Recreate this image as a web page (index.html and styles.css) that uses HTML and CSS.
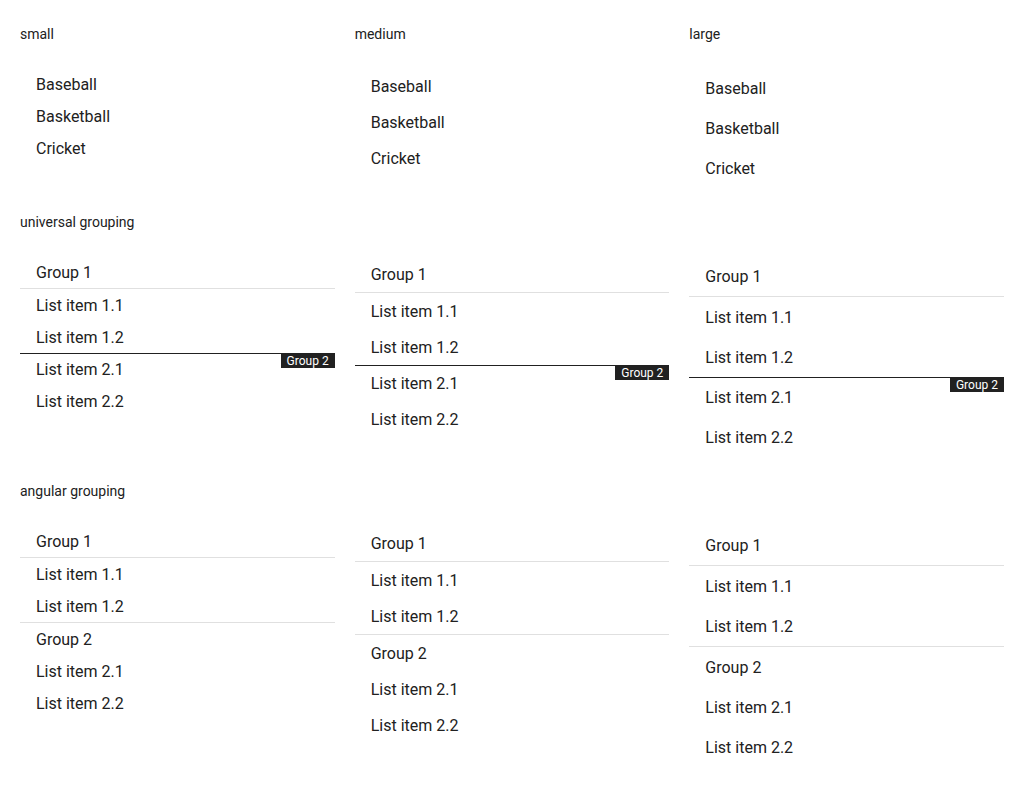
FILE: index.html
```
<!DOCTYPE html>
<html lang="en">
<head>
<meta charset="utf-8">
<title>List sizes and grouping</title>
<link rel="stylesheet" href="styles.css">
</head>
<body>
<main class="page">
  <section class="row">
    <div>
      <h2 class="title">small</h2>
      <ul class="list small"><li class="item">Baseball</li><li class="item">Basketball</li><li class="item">Cricket</li></ul>
    </div>
    <div>
      <h2 class="title">medium</h2>
      <ul class="list medium"><li class="item">Baseball</li><li class="item">Basketball</li><li class="item">Cricket</li></ul>
    </div>
    <div>
      <h2 class="title">large</h2>
      <ul class="list large"><li class="item">Baseball</li><li class="item">Basketball</li><li class="item">Cricket</li></ul>
    </div>
  </section>
  <section class="row">
    <h2 class="title wide">universal grouping</h2>
    <ul class="list small"><li class="item fixed">Group 1</li><li class="item">List item 1.1</li><li class="item">List item 1.2</li><li class="item first">List item 2.1<span class="tag">Group 2</span></li><li class="item">List item 2.2</li></ul>
    <ul class="list medium"><li class="item fixed">Group 1</li><li class="item">List item 1.1</li><li class="item">List item 1.2</li><li class="item first">List item 2.1<span class="tag">Group 2</span></li><li class="item">List item 2.2</li></ul>
    <ul class="list large"><li class="item fixed">Group 1</li><li class="item">List item 1.1</li><li class="item">List item 1.2</li><li class="item first">List item 2.1<span class="tag">Group 2</span></li><li class="item">List item 2.2</li></ul>
  </section>
  <section class="row">
    <h2 class="title wide">angular grouping</h2>
    <ul class="list small"><li class="item fixed">Group 1</li><li class="item">List item 1.1</li><li class="item">List item 1.2</li><li class="item group">Group 2</li><li class="item">List item 2.1</li><li class="item">List item 2.2</li></ul>
    <ul class="list medium"><li class="item fixed">Group 1</li><li class="item">List item 1.1</li><li class="item">List item 1.2</li><li class="item group">Group 2</li><li class="item">List item 2.1</li><li class="item">List item 2.2</li></ul>
    <ul class="list large"><li class="item fixed">Group 1</li><li class="item">List item 1.1</li><li class="item">List item 1.2</li><li class="item group">Group 2</li><li class="item">List item 2.1</li><li class="item">List item 2.2</li></ul>
  </section>
</main>
</body>
</html>
```
FILE: styles.css
```
body {
  margin: 0;
  background: #fff;
  color: #212121;
  font-family: Roboto, sans-serif;
  font-size: 16px;
}

.page {
  display: flex;
  flex-direction: column;
  gap: 24px;
  padding: 24px 20px 20px;
}

.row {
  display: grid;
  grid-template-columns: repeat(3, 1fr);
  column-gap: 20px;
}

.title {
  margin: 0 0 24px;
  font-size: 14px;
  font-weight: 400;
  line-height: 20px;
}

.wide { grid-column: 1 / -1; }

.list {
  margin: 0;
  padding: 0;
  list-style: none;
}

.small { --line: 30px; }
.medium { --line: 34px; }
.large { --line: 38px; }

.item {
  position: relative;
  padding: 2px 16px 0;
  line-height: var(--line);
}

.fixed { border-bottom: 1px solid #e0e0e0; }
.group { border-top: 1px solid #e0e0e0; }

.first::before {
  content: "";
  position: absolute;
  top: 0;
  right: 0;
  left: 0;
  border-top: 1px solid #212121;
}

.tag {
  position: absolute;
  top: 0;
  right: 0;
  padding: 2px 6px 0;
  background: #212121;
  color: #fff;
  font-size: 12px;
  line-height: 13px;
}
```
